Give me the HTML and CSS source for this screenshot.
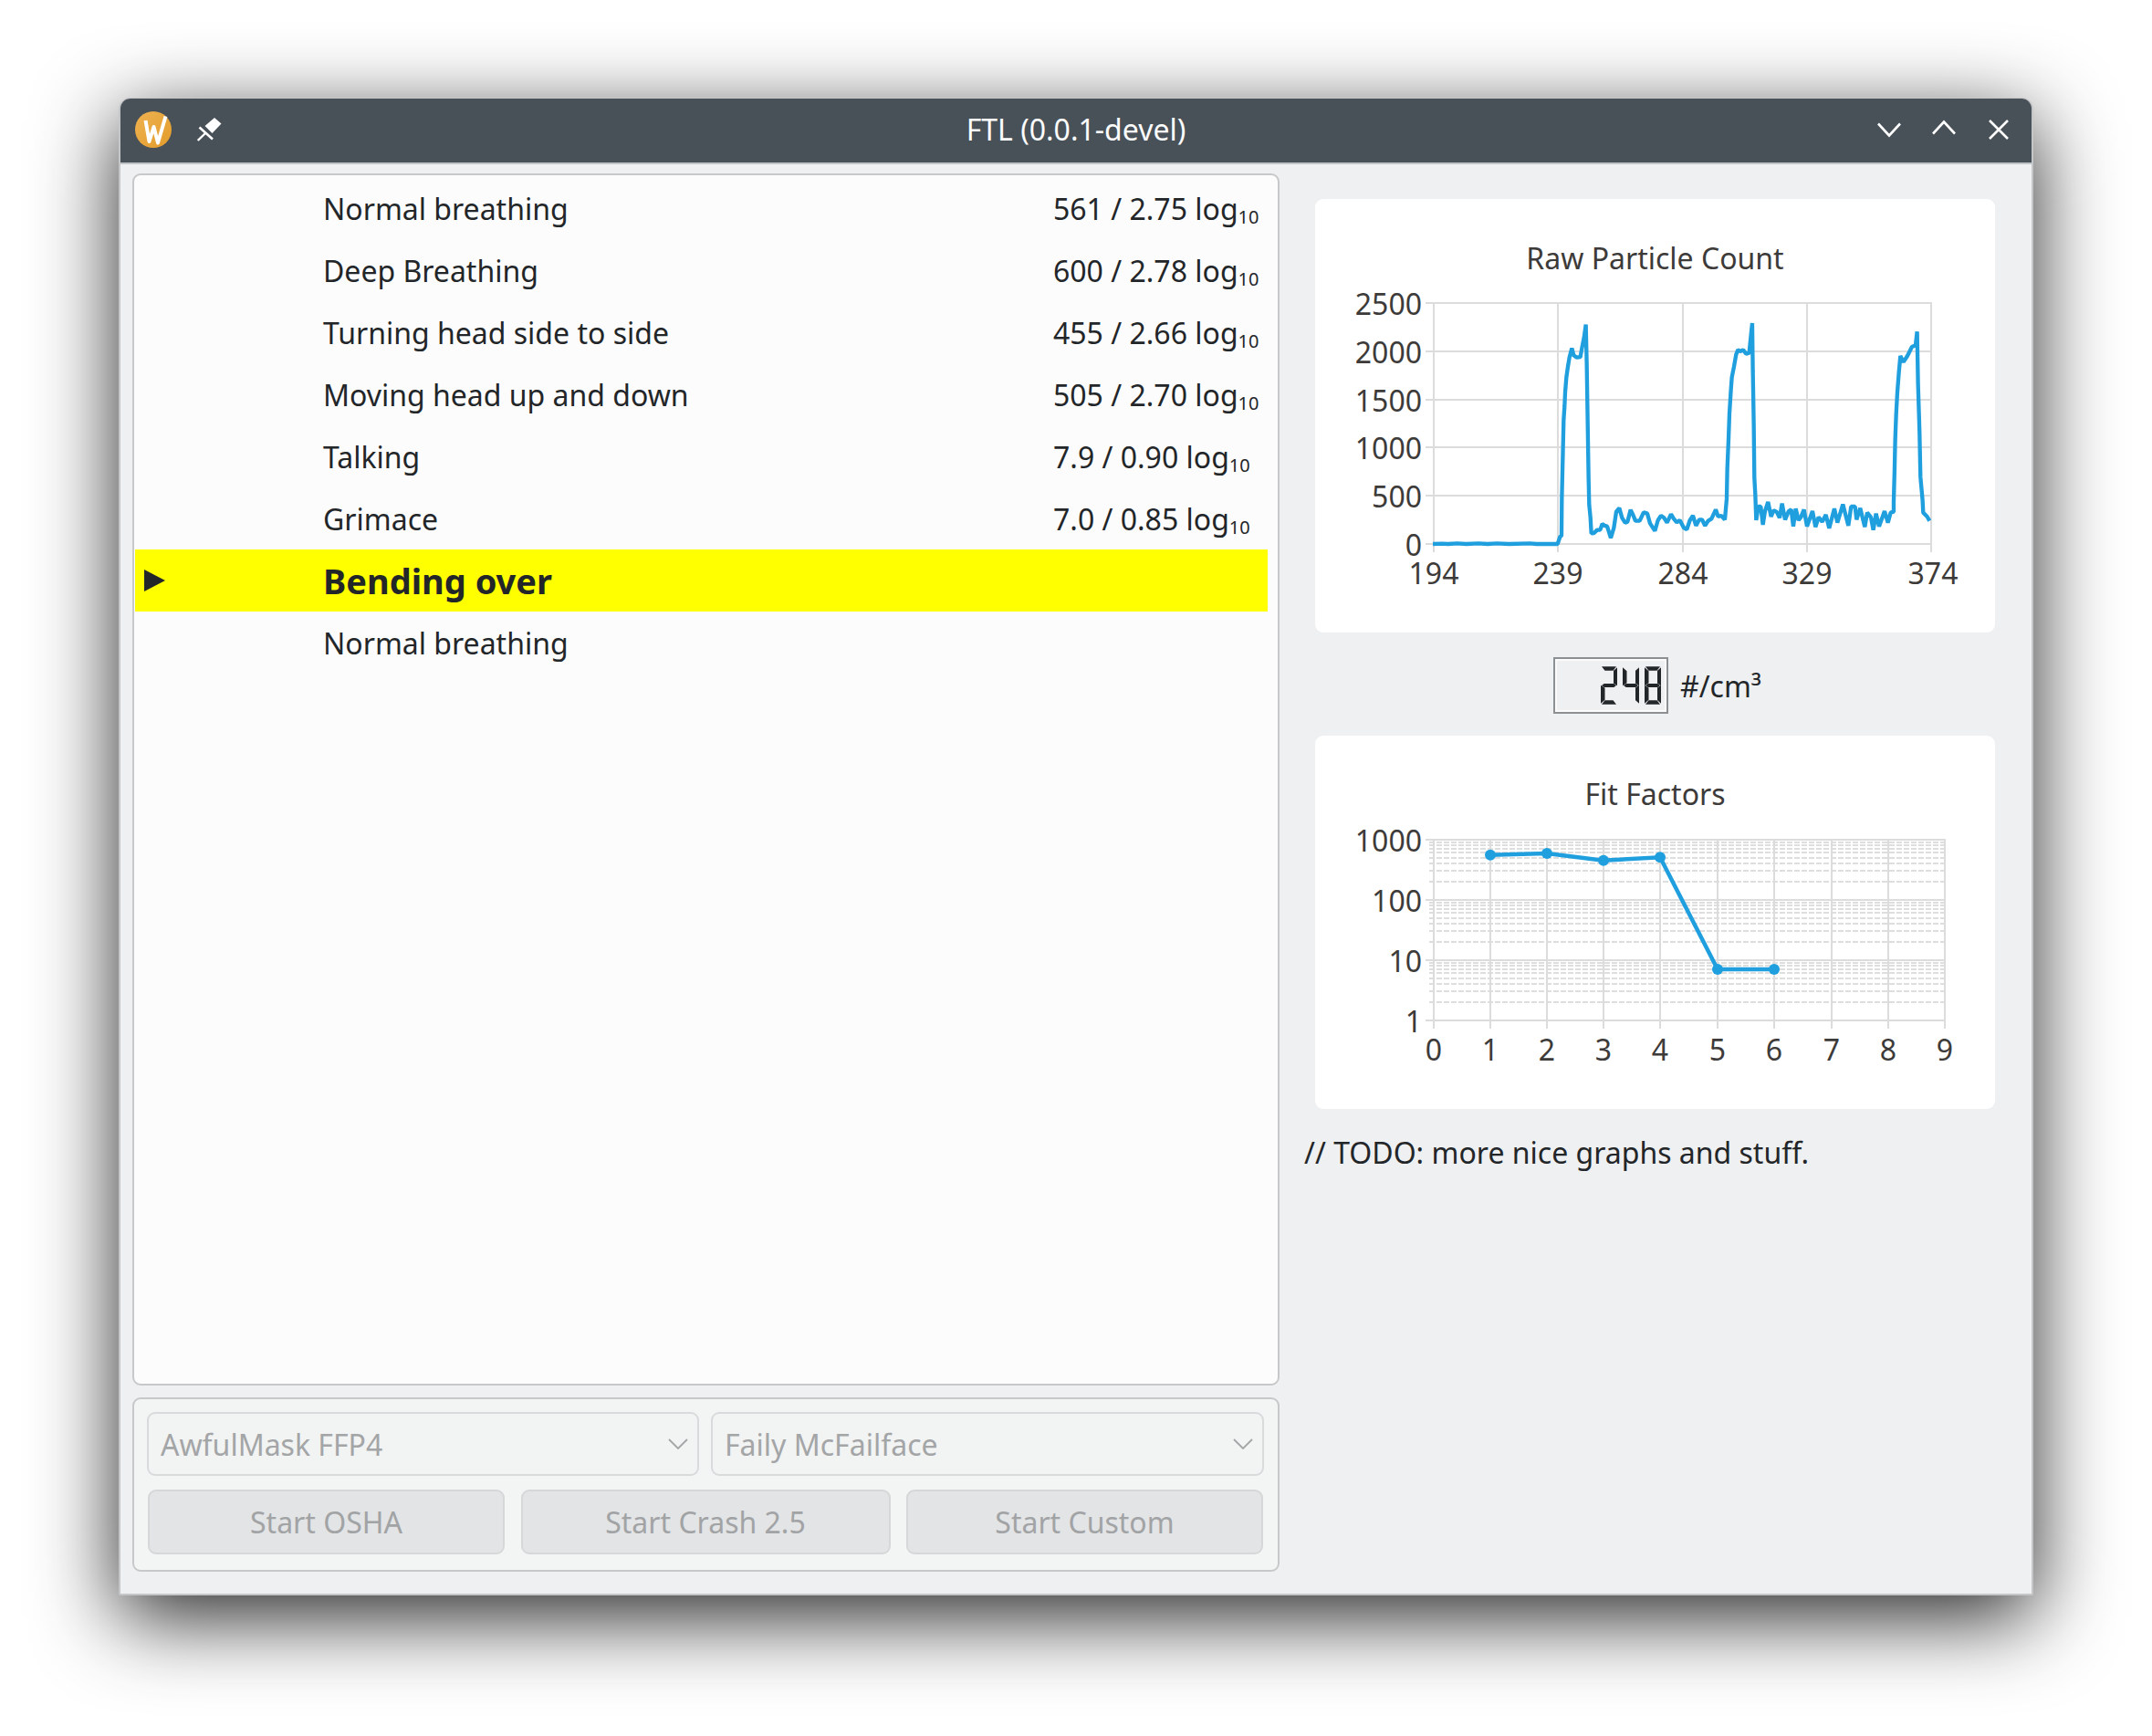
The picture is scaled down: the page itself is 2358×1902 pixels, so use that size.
FILE: index.html
```html
<!DOCTYPE html>
<html lang="en">
<head>
    <meta charset="UTF-8">
    <title>FTL (0.0.1-devel)</title>
    <link rel="stylesheet" href="styles.css">
</head>
<body>
    <div class="window">
        <header class="titlebar">
            <div class="titlebar-left">
                <svg class="app-logo" width="40" height="40" viewBox="0 0 40 40">
                    <defs>
                        <linearGradient id="logo-fill" x1="0" y1="0" x2="1" y2="1">
                            <stop offset="0" stop-color="#efb252"/>
                            <stop offset="1" stop-color="#e29c2a"/>
                        </linearGradient>
                    </defs>
                    <circle cx="20" cy="20" r="20" fill="url(#logo-fill)"/>
                    <polyline points="11.5,10 15.5,33 20.5,17 25,34.5 33.5,5.5" fill="none" stroke="#fff" stroke-width="4" stroke-linejoin="round"/>
                </svg>
                <svg class="pin-icon" width="27" height="26" viewBox="0 0 27 26">
                    <polygon points="19,0 26.5,6.5 16.5,17 8.5,9" fill="#fff"/>
                    <path d="M2.5 10.5 17 23.5" stroke="#fff" stroke-width="2.6" fill="none"/>
                    <path d="M0.8 25 9.5 16.5" stroke="#fff" stroke-width="2.4" fill="none"/>
                </svg>
            </div>
            <div class="title">FTL (0.0.1-devel)</div>
            <div class="titlebar-right">
                <svg width="26" height="22" viewBox="0 0 26 22"><path d="M1 4.5 13 17.5 25 4.5" class="wm-stroke"/></svg>
                <svg width="26" height="22" viewBox="0 0 26 22"><path d="M1 15.5 13 2.5 25 15.5" class="wm-stroke"/></svg>
                <svg class="wm-close" width="22" height="22" viewBox="0 0 22 22"><path d="M1 1 21 21M21 1 1 21" class="wm-stroke"/></svg>
            </div>
        </header>

        <div class="content">
            <div class="left-col">
                <section class="test-list">
                    <div class="row"><span></span><span>Normal breathing</span><span>561 / 2.75 log<sub>10</sub></span></div>
                    <div class="row"><span></span><span>Deep Breathing</span><span>600 / 2.78 log<sub>10</sub></span></div>
                    <div class="row"><span></span><span>Turning head side to side</span><span>455 / 2.66 log<sub>10</sub></span></div>
                    <div class="row"><span></span><span>Moving head up and down</span><span>505 / 2.70 log<sub>10</sub></span></div>
                    <div class="row"><span></span><span>Talking</span><span>7.9 / 0.90 log<sub>10</sub></span></div>
                    <div class="row"><span></span><span>Grimace</span><span>7.0 / 0.85 log<sub>10</sub></span></div>
                    <div class="row row-active"><span class="arrow"></span><span>Bending over</span><span></span></div>
                    <div class="row"><span></span><span>Normal breathing</span><span></span></div>
                </section>

                <section class="controls">
                    <div class="combo-row">
                        <div class="combo">
                            <span>AwfulMask FFP4</span>
                            <svg width="22" height="12" viewBox="0 0 22 12"><path d="M1 1 11 11 21 1" class="combo-arrow"/></svg>
                        </div>
                        <div class="combo">
                            <span>Faily McFailface</span>
                            <svg width="22" height="12" viewBox="0 0 22 12"><path d="M1 1 11 11 21 1" class="combo-arrow"/></svg>
                        </div>
                    </div>
                    <div class="button-row">
                        <button class="btn" disabled>Start OSHA</button>
                        <button class="btn" disabled>Start Crash 2.5</button>
                        <button class="btn" disabled>Start Custom</button>
                    </div>
                </section>
            </div>

            <div class="right-col">
                <section class="chart-card chart-raw">
                    <div class="chart-title">Raw Particle Count</div>
                    <svg class="chart" width="745" height="388" viewBox="1441 305 745 388">
                        <path class="grid" d="M1562 332H2117M1562 385H2117M1562 438H2117M1562 490H2117M1562 543H2117M1562 596H2117"/>
                        <path class="grid" d="M1571 332V605M1707 332V605M1844 332V605M1980 332V605M2116 332V605"/>
                        <g class="axis-y">
                            <text x="1558" y="345">2500</text>
                            <text x="1558" y="398">2000</text>
                            <text x="1558" y="451">1500</text>
                            <text x="1558" y="503">1000</text>
                            <text x="1558" y="556">500</text>
                            <text x="1558" y="609">0</text>
                        </g>
                        <g class="axis-x">
                            <text x="1571" y="640">194</text>
                            <text x="1707" y="640">239</text>
                            <text x="1844" y="640">284</text>
                            <text x="1980" y="640">329</text>
                            <text x="2118" y="640">374</text>
                        </g>
                        <!-- traced in 3x coords, hence the scale -->
                        <polyline class="series-raw" transform="translate(1690 340) scale(0.3333)" points="-360,768 -330,767 -310,768 -280,766 -250,768 -210,766 -180,768 -150,766 -110,768 -40,766 -20,768 50,768 58,745 63,740 64,620 67,490 70,360 73,315 75,270 79,220 84,185 89,155 97,125 103,148 113,155 125,153 130,125 137,90 143,47 146,180 149,370 152,555 154,640 158,680 161,733 170,732 180,722 190,722 197,702 205,708 213,710 225,748 235,715 243,662 253,650 262,682 272,698 280,695 290,656 298,672 306,692 320,692 333,664 345,668 354,700 370,725 380,690 390,675 400,682 410,698 423,670 432,685 442,697 452,690 465,715 475,720 485,690 495,675 505,708 516,688 525,688 535,708 545,692 556,685 570,655 578,678 588,675 600,688 606,620 608,520 612,425 615,340 620,260 623,220 630,185 637,145 643,130 650,135 660,130 670,143 680,140 686,80 690,42 692,200 695,375 697,550 700,605 703,690 710,645 718,645 725,705 732,660 742,630 752,678 760,658 770,662 780,682 788,635 798,688 810,660 818,655 825,710 833,652 842,690 850,680 860,655 870,710 888,660 898,712 908,680 920,695 932,672 943,716 960,652 970,698 988,638 1006,708 1015,645 1028,645 1033,688 1045,650 1060,712 1068,665 1080,680 1088,722 1097,668 1107,710 1125,660 1136,698 1145,665 1155,662 1155,630 1158,520 1160,425 1163,345 1167,270 1172,205 1177,150 1187,170 1200,150 1215,120 1227,115 1232,70 1235,240 1240,400 1243,548 1250,625 1252,665 1265,678 1273,692"/>
                    </svg>
                </section>

                <div class="reading">
                    <div class="lcd" role="img" aria-label="248">
                        <div class="digit"><i class="seg a"></i><i class="seg b"></i><i class="seg g"></i><i class="seg e"></i><i class="seg d"></i></div>
                        <div class="digit"><i class="seg f"></i><i class="seg b"></i><i class="seg g"></i><i class="seg c"></i></div>
                        <div class="digit"><i class="seg a"></i><i class="seg f"></i><i class="seg b"></i><i class="seg g"></i><i class="seg e"></i><i class="seg c"></i><i class="seg d"></i></div>
                    </div>
                    <span class="unit">#/cm³</span>
                </div>

                <section class="chart-card chart-fit">
                    <div class="chart-title">Fit Factors</div>
                    <svg class="chart" width="745" height="323" viewBox="1441 892 745 323">
                        <path class="grid-minor" d="M1566 1098H2131M1566 1086H2131M1566 1078H2131M1566 1072H2131M1566 1066H2131M1566 1062H2131M1566 1058H2131M1566 1055H2131M1566 1032H2131M1566 1020H2131M1566 1012H2131M1566 1006H2131M1566 1000H2131M1566 996H2131M1566 992H2131M1566 989H2131M1566 966H2131M1566 954H2131M1566 946H2131M1566 940H2131M1566 934H2131M1566 930H2131M1566 926H2131M1566 923H2131"/>
                        <path class="grid" d="M1562 920H2131M1562 986H2131M1562 1052H2131M1562 1118H2131"/>
                        <path class="grid" d="M1571 919V1127M1633 919V1127M1695 919V1127M1757 919V1127M1819 919V1127M1882 919V1127M1944 919V1127M2007 919V1127M2069 919V1127M2131 919V1127"/>
                        <g class="axis-y">
                            <text x="1558" y="933">1000</text>
                            <text x="1558" y="999">100</text>
                            <text x="1558" y="1065">10</text>
                            <text x="1558" y="1131">1</text>
                        </g>
                        <g class="axis-x">
                            <text x="1571" y="1162">0</text>
                            <text x="1633" y="1162">1</text>
                            <text x="1695" y="1162">2</text>
                            <text x="1757" y="1162">3</text>
                            <text x="1819" y="1162">4</text>
                            <text x="1882" y="1162">5</text>
                            <text x="1944" y="1162">6</text>
                            <text x="2007" y="1162">7</text>
                            <text x="2069" y="1162">8</text>
                            <text x="2131" y="1162">9</text>
                        </g>
                        <polyline class="series-fit" points="1633,936.7 1695,935 1757,942.7 1819,939.3 1882,1062 1944,1062"/>
                        <g class="series-dots">
                            <circle cx="1633" cy="936.7" r="6"/>
                            <circle cx="1695" cy="935" r="6"/>
                            <circle cx="1757" cy="942.7" r="6"/>
                            <circle cx="1819" cy="939.3" r="6"/>
                            <circle cx="1882" cy="1062" r="6"/>
                            <circle cx="1944" cy="1062" r="6"/>
                        </g>
                    </svg>
                </section>

                <p class="todo">// TODO: more nice graphs and stuff.</p>
            </div>
        </div>
    </div>
</body>
</html>
```

FILE: styles.css
```css
/* page and window */
html {
    background: #fff;
}

body {
    box-sizing: border-box;
    height: 1902px;
    margin: 0;
    padding: 107px 0 0 130px;
    color: #232629;
    font-family: "Noto Sans", sans-serif;
    font-size: 32px;
}

.window {
    box-sizing: border-box;
    width: 2098px;
    height: 1641px;
    border: 2px solid #c4c6c8;
    border-top-width: 1px;
    border-radius: 13px 13px 2px 2px;
    background: #eff0f2;
    box-shadow: 0 24px 90px rgba(0, 0, 0, 0.85);
}

/* title bar */
.titlebar {
    display: grid;
    grid-template-columns: 1fr auto 1fr;
    align-items: center;
    box-sizing: border-box;
    height: 72px;
    padding-bottom: 2px;
    border-bottom: 2px solid #c0c3c6;
    border-radius: 11px 11px 0 0;
    background: #485058;
    color: #fcfcfc;
}

.titlebar-left {
    display: flex;
    align-items: center;
    padding-left: 16px;
    gap: 28px;
}

.titlebar-right {
    display: flex;
    align-items: center;
    justify-content: flex-end;
    padding-right: 25px;
    gap: 34px;
}

.wm-close {
    margin-left: 2px;
}

.title {
    line-height: 44px;
}

.wm-stroke {
    fill: none;
    stroke: #fff;
    stroke-width: 2.6;
}

/* main area */
.content {
    display: flex;
    padding: 10px 0 0 13px;
}

.left-col {
    width: 1257px;
}

.right-col {
    width: 758px;
    margin-left: 26px;
    padding-top: 28px;
}

.test-list {
    box-sizing: border-box;
    height: 1328px;
    padding: 2px 11px 0 1px;
    border: 2px solid #c6c8ca;
    border-radius: 9px;
    background: #fcfcfc;
}

.row {
    display: grid;
    grid-template-columns: 206px 800px 1fr;
    align-items: center;
    height: 68px;
}

.row sub {
    font-size: 20px;
    line-height: 0;
    vertical-align: -4px;
}

.row-active {
    background: #ffff00;
    font-size: 38px;
    font-weight: 700;
}

.arrow {
    width: 0;
    height: 0;
    margin-left: 10px;
    border-style: solid;
    border-width: 12px 0 12px 23px;
    border-color: transparent transparent transparent #232629;
}

/* combos and buttons */
.controls {
    box-sizing: border-box;
    height: 191px;
    margin-top: 13px;
    padding: 14px 14px 0;
    border: 2px solid #c6c8ca;
    border-radius: 9px;
    background: #f3f5f5;
}

.combo-row {
    display: grid;
    grid-template-columns: 605px 606px;
    gap: 13px;
}

.combo {
    display: flex;
    align-items: center;
    justify-content: space-between;
    box-sizing: border-box;
    height: 70px;
    padding: 0 10px 0 13px;
    border: 2px solid #d8dadb;
    border-radius: 9px;
    background: #f2f3f3;
    color: #a3a5a7;
}

.combo-arrow {
    fill: none;
    stroke: #a3a5a7;
    stroke-width: 1.8;
}

.button-row {
    display: grid;
    grid-template-columns: 391px 405px 391px;
    gap: 17.5px;
    margin: 15px 0 0 1px;
}

.btn {
    height: 71px;
    border: 2px solid #d5d7d8;
    border-radius: 9px;
    background: #e3e4e6;
    color: #a1a3a5;
    font: inherit;
}

/* charts */
.chart-card {
    margin-left: 13px;
    border-radius: 9px;
    background: #fff;
}

.chart-raw {
    height: 475px;
    padding-top: 43px;
    box-sizing: border-box;
}

.chart-fit {
    height: 409px;
    padding-top: 42px;
    box-sizing: border-box;
}

.chart-title {
    color: #3d3b39;
    line-height: 44px;
    text-align: center;
}

.chart {
    display: block;
}

.chart text {
    fill: #3d3b39;
    font-size: 32px;
}

.axis-y text {
    text-anchor: end;
}

.axis-x text {
    text-anchor: middle;
}

.grid {
    fill: none;
    stroke: #dcdcdc;
    stroke-width: 2;
    shape-rendering: crispEdges;
}

.grid-minor {
    fill: none;
    stroke: #dedede;
    stroke-width: 2;
    stroke-dasharray: 6 2;
    shape-rendering: crispEdges;
}

.series-raw {
    fill: none;
    stroke: #209fdf;
    stroke-width: 13;
    stroke-linejoin: bevel;
}

.series-fit {
    fill: none;
    stroke: #209fdf;
    stroke-width: 4.5;
}

.series-dots {
    fill: #209fdf;
}

/* lcd reading */
.reading {
    display: flex;
    align-items: center;
    height: 62px;
    margin: 27px 0 24px;
    padding-left: 274px;
    gap: 13px;
}

.lcd {
    display: flex;
    justify-content: flex-end;
    align-items: center;
    gap: 6px;
    box-sizing: border-box;
    width: 126px;
    height: 62px;
    padding-right: 6px;
    border: 2px solid #8d9093;
    box-shadow: inset 0 0 0 2px #fbfbfb;
}

.digit {
    display: grid;
    grid-template-columns: 4.5px 9px 4.5px;
    grid-template-rows: 4.5px 14px 4.5px 14px 4.5px;
}

.seg {
    background: #232629;
}

.seg.a {
    grid-area: 1 / 1 / 2 / 4;
    clip-path: polygon(1px 0, calc(100% - 1px) 0, calc(100% - 4.5px) 100%, 4.5px 100%);
}

.seg.d {
    grid-area: 5 / 1 / 6 / 4;
    clip-path: polygon(4.5px 0, calc(100% - 4.5px) 0, calc(100% - 1px) 100%, 1px 100%);
}

.seg.g {
    grid-area: 3 / 1 / 4 / 4;
    clip-path: polygon(1px 50%, 4px 0, calc(100% - 4px) 0, calc(100% - 1px) 50%, calc(100% - 4px) 100%, 4px 100%);
}

.seg.f {
    grid-area: 1 / 1 / 4 / 2;
    clip-path: polygon(0 1px, 100% 5px, 100% calc(100% - 5px), 0 calc(100% - 2px));
}

.seg.b {
    grid-area: 1 / 3 / 4 / 4;
    clip-path: polygon(100% 1px, 0 5px, 0 calc(100% - 5px), 100% calc(100% - 2px));
}

.seg.e {
    grid-area: 3 / 1 / 6 / 2;
    clip-path: polygon(0 2px, 100% 5px, 100% calc(100% - 5px), 0 calc(100% - 1px));
}

.seg.c {
    grid-area: 3 / 3 / 6 / 4;
    clip-path: polygon(100% 2px, 0 5px, 0 calc(100% - 5px), 100% calc(100% - 1px));
}

.todo {
    margin: 26px 0 0;
    padding-left: 1px;
    line-height: 44px;
}
```
